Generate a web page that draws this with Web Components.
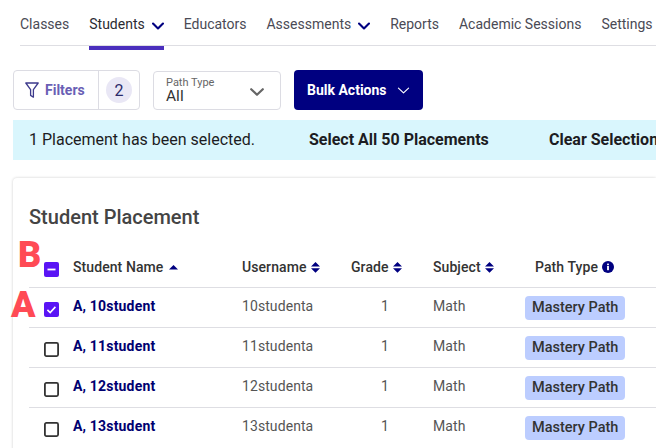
<!DOCTYPE html>
<html>
<head>
<meta charset="utf-8">
<style>
  html, body { margin: 0; padding: 0; width: 656px; height: 448px; overflow: hidden; background: #fff; }
  body { font-family: Roboto, "Liberation Sans", sans-serif; color: #333; }
</style>
</head>
<body>
<app-page></app-page>
<script>
const chevron = (w, h, color, sw) => `<svg width="${w}" height="${h}" viewBox="0 0 14 8" fill="none" stroke="${color}" stroke-width="${sw}" stroke-linecap="round" stroke-linejoin="round"><path d="M1.2 1.2 7 6.8l5.8-5.6"/></svg>`;
const sortBoth = `<svg width="9" height="11" viewBox="0 0 9 11" fill="#000080"><path d="M4.5 0 9 4.4H0zM0 6.2h9L4.5 10.8z"/></svg>`;
const sortUp = `<svg width="9" height="5" viewBox="0 0 9 5" fill="#000080"><path d="M4.5 0 9 4.6H0z"/></svg>`;

class TopNav extends HTMLElement {
  connectedCallback() {
    this.attachShadow({ mode: "open" });
    this.shadowRoot.innerHTML = /*html*/ `
      <style>
        :host { display: block; margin-left: 20px; height: 50px; position: relative; }
        nav { display: flex; gap: 20px; height: 46px; border-bottom: 1px solid #dedee3; box-sizing: border-box; white-space: nowrap; }
        .item { display: flex; align-items: center; gap: 7px; height: 50px; padding-bottom: 2px; box-sizing: border-box;
          font-size: 14px; color: #4a4a55; flex: none; position: relative; }
        .item.active { color: #2b2b33; }
        .item.active::after { content: ""; position: absolute; left: 0; right: 0; top: 46px; height: 4px; background: #4a2fbd; }
        .item svg { margin-top: 3px; }
      </style>
      <nav>
        <span class="item">Classes</span>
        <span class="item active">Students ${chevron(12, 8, "#000080", 2.5)}</span>
        <span class="item">Educators</span>
        <span class="item">Assessments ${chevron(12, 8, "#000080", 2.5)}</span>
        <span class="item">Reports</span>
        <span class="item">Academic Sessions</span>
        <span class="item">Settings</span>
      </nav>`;
  }
}

class FilterBar extends HTMLElement {
  connectedCallback() {
    this.attachShadow({ mode: "open" });
    this.shadowRoot.innerHTML = /*html*/ `
      <style>
        :host { display: flex; align-items: flex-start; margin: 20px 0 0 13px; height: 40px; }
        .filters { width: 127px; height: 40px; box-sizing: border-box; border: 1px solid #dcdce3; border-radius: 4px; display: flex; align-items: center; }
        .label { width: 85px; display: flex; align-items: center; gap: 6px; padding-left: 11px; box-sizing: border-box; height: 100%;
          border-right: 1px solid #dcdce3; color: #6a5fb5; font-weight: 700; font-size: 14px; }
        .count { width: 26px; height: 26px; border-radius: 50%; background: #e9e7f5; margin-left: 7px; display: flex; align-items: center; justify-content: center;
          font-size: 16px; color: #2a2a6a; }
        .select { width: 128px; height: 39px; margin: 1px 0 0 13px; box-sizing: border-box; border: 1px solid #dcdce3; border-radius: 4px; padding: 5px 12px 0 12px; position: relative; color: #333; }
        .select small { display: block; font-size: 11px; line-height: 12px; color: #666; }
        .select b { display: block; font-weight: 400; font-size: 15.5px; line-height: 14px; }
        .select svg { position: absolute; right: 16px; top: 16px; }
        .bulk { width: 129px; height: 40px; margin-left: 13px; border-radius: 4px; background: #000080; color: #fff; font: 700 14px Roboto, sans-serif;
          display: flex; align-items: center; gap: 10px; padding: 0 0 0 13px; box-sizing: border-box; white-space: nowrap; }
      </style>
      <div class="filters">
        <div class="label">
          <svg width="14" height="18" viewBox="0 0 14 18" fill="none" stroke="#3d3a8c" stroke-width="1.3" stroke-linejoin="round"><path d="M.8 2h12.4L8.4 8.6v7.6l-2.8-1.8V8.6z"/></svg>
          Filters
        </div>
        <div class="count">2</div>
      </div>
      <div class="select">
        <small>Path Type</small><b>All</b>
        ${chevron(14, 8, "#666", 2.2)}
      </div>
      <div class="bulk"><span>Bulk Actions</span> ${chevron(13, 7, "#fff", 1.3)}</div>`;
  }
}

class SelectBanner extends HTMLElement {
  connectedCallback() {
    this.attachShadow({ mode: "open" });
    this.shadowRoot.innerHTML = /*html*/ `
      <style>
        :host { display: flex; align-items: center; margin: 10px 0 0 13px; height: 40px; box-sizing: border-box; background: #d9f6fd; padding: 0 0 2px 16px; font-size: 16px; color: #1c1c22; white-space: nowrap; overflow: hidden; }
        b { font-weight: 700; font-size: 16px; }
        span { width: 280px; flex: none; }
        .all { width: 240px; flex: none; }
      </style>
      <span>1 Placement has been selected.</span>
      <b class="all">Select All 50 Placements</b>
      <b>Clear Selection</b>`;
  }
}

class StudentRow extends HTMLElement {
  connectedCallback() {
    this.attachShadow({ mode: "open" });
    const checked = this.hasAttribute("checked");
    const box = checked
      ? `<svg width="15" height="15" viewBox="0 0 15 15"><rect width="15" height="15" rx="2" fill="#5a14f5"/><path d="M3.4 7.8l2.8 2.7 5.2-5.6" fill="none" stroke="#fff" stroke-width="1.6"/></svg>`
      : `<svg width="15" height="15" viewBox="0 0 15 15"><rect x=".9" y=".9" width="13.2" height="13.2" rx="1.5" fill="#fff" stroke="#333" stroke-width="1.8"/></svg>`;
    this.shadowRoot.innerHTML = /*html*/ `
      <style>
        :host { display: grid; grid-template-columns: 44px 169px 109px 82px 92px 1fr; height: 40px; align-items: center; border-top: 1px solid #dedee3; box-sizing: border-box; font-size: 14px; letter-spacing: .08px; color: #555; white-space: nowrap; }
        svg { display: block; margin: 3px 0 0 15px; }
        span { margin-top: -3px; }
        .name { font-weight: 700; color: #000070; font-size: 14px; letter-spacing: .18px; }
        .grade { padding-left: 30px; }
        .tag { display: inline-block; background: #bccdff; color: #333; font-weight: 500; font-size: 14.5px; letter-spacing: 0; line-height: 24px; padding: 0 7px; border-radius: 4px; margin-top: 4px; }
      </style>
      ${box}
      <span class="name">${this.getAttribute("name")}</span>
      <span>${this.getAttribute("user")}</span>
      <span class="grade">1</span>
      <span>Math</span>
      <span><span class="tag">Mastery Path</span></span>`;
  }
}

class PlacementCard extends HTMLElement {
  connectedCallback() {
    this.attachShadow({ mode: "open" });
    this.shadowRoot.innerHTML = /*html*/ `
      <style>
        :host { display: block; margin: 18px 0 0 13px; padding: 0 0 0 16px; height: 300px; border-radius: 4px 0 0 0; box-shadow: 0 0 3px rgba(0,0,0,.2); position: relative; background: #fff; }
        h2 { margin: 0; padding-top: 27px; font-size: 20px; line-height: 24px; font-weight: 500; color: #444; }
        .head { display: grid; grid-template-columns: 44px 169px 109px 82px 92px 1fr; height: 40px; margin-top: 18px; align-items: center; font-size: 14px; letter-spacing: .08px; font-weight: 500; color: #333; white-space: nowrap; }
        .head span { display: flex; align-items: center; gap: 4px; }
        .head span.first { gap: 6px; }
        .box { margin: 5px 0 0 15px; display: block; }
        .mark { position: absolute; font: 900 36px/36px Roboto, sans-serif; color: #ff4a55; }
      </style>
      <h2>Student Placement</h2>
      <div class="head">
        <svg class="box" width="15" height="15" viewBox="0 0 15 15"><rect width="15" height="15" rx="2" fill="#5a14f5"/><rect x="3.5" y="6.6" width="8" height="1.8" fill="#fff"/></svg>
        <span class="first">Student Name ${sortUp}</span>
        <span>Username ${sortBoth}</span>
        <span>Grade ${sortBoth}</span>
        <span>Subject ${sortBoth}</span>
        <span style="padding-left:10px">Path Type
          <svg width="12" height="12" viewBox="0 0 12 12"><circle cx="6" cy="6" r="6" fill="#000080"/><rect x="5.1" y="5" width="1.8" height="4.2" fill="#fff"/><rect x="5.1" y="2.6" width="1.8" height="1.6" fill="#fff"/></svg>
        </span>
      </div>
      <slot></slot>
      <span class="mark" style="left:5px;top:59px">B</span>
      <span class="mark" style="left:-2px;top:109px">A</span>`;
  }
}

class AppPage extends HTMLElement {
  connectedCallback() {
    this.attachShadow({ mode: "open" });
    this.shadowRoot.innerHTML = /*html*/ `
      <style>:host { display: block; width: 656px; height: 448px; overflow: hidden; }</style>
      <top-nav></top-nav>
      <filter-bar></filter-bar>
      <select-banner></select-banner>
      <placement-card>
        <student-row checked name="A, 10student" user="10studenta"></student-row>
        <student-row name="A, 11student" user="11studenta"></student-row>
        <student-row name="A, 12student" user="12studenta"></student-row>
        <student-row name="A, 13student" user="13studenta"></student-row>
      </placement-card>`;
  }
}

customElements.define("top-nav", TopNav);
customElements.define("filter-bar", FilterBar);
customElements.define("select-banner", SelectBanner);
customElements.define("student-row", StudentRow);
customElements.define("placement-card", PlacementCard);
customElements.define("app-page", AppPage);
</script>
</body>
</html>
